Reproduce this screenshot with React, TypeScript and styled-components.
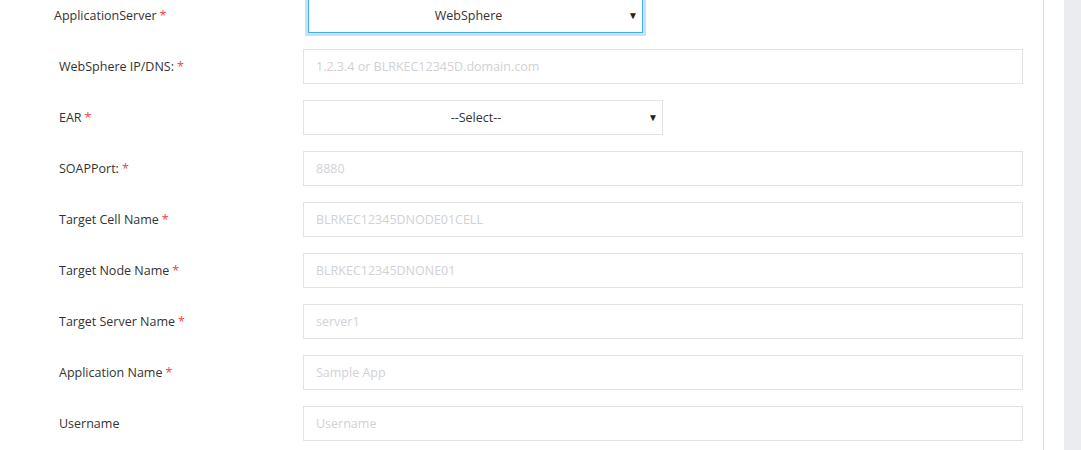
import React from "react";
import styled, { createGlobalStyle } from "styled-components";

const Global = createGlobalStyle`
  html, body { margin: 0; padding: 0; background: #fff; }
  body { font-family: "Open Sans", "Noto Sans", sans-serif; font-size: 13px; color: #333; overflow: hidden; }
`;

const Page = styled.div`
  display: flex;
  width: 1081px;
  height: 450px;
  overflow: hidden;
`;

const Main = styled.div`
  width: 1043px;
  border-right: 1px solid #dcdcdc;
  flex-shrink: 0;
`;

const Spacer = styled.div`
  width: 20px;
  flex-shrink: 0;
`;

const Side = styled.div`
  flex: 1;
  background: #ebecf0;
`;

const Form = styled.div`
  display: flex;
  flex-direction: column;
  gap: 16px;
  margin-top: -2px;
`;

const Row = styled.div<{ $indent: number }>`
  display: grid;
  grid-template-columns: ${(p) => 303 - p.$indent}px 720px;
  align-items: center;
  padding-left: ${(p) => p.$indent}px;
  height: 35px;
`;

const Label = styled.label`
  font-size: 12.5px;
  color: #333;
  white-space: nowrap;
`;

const Star = styled.span`
  color: #e8474c;
  margin-left: 3px;
`;

const Input = styled.input`
  box-sizing: border-box;
  width: 720px;
  height: 35px;
  border: 1px solid #e3e3e3;
  padding: 0 12px;
  font-family: inherit;
  font-size: 12.5px;
  outline: none;
  &::placeholder { color: #d0d2d6; }
`;

const SelectBox = styled.div<{ $w: number; $focus?: boolean; $offset?: number }>`
  box-sizing: border-box;
  position: relative;
  width: ${(p) => p.$w}px;
  height: 35px;
  margin-left: ${(p) => p.$offset || 0}px;
  padding-right: 14px;
  display: flex;
  align-items: center;
  justify-content: center;
  border: 1px solid ${(p) => (p.$focus ? "#45b1f2" : "#e3e3e3")};
  box-shadow: ${(p) => (p.$focus ? "0 0 0 3px #c5e2f7" : "none")};
  font-size: 12.5px;
  color: #333;
`;

const Caret = styled.span`
  position: absolute;
  right: 4px;
  top: 50%;
  transform: translateY(-55%);
  font-size: 10px;
  color: #222;
`;

type Field = { label: string; req: boolean; placeholder?: string; select?: string };

const fields: Field[] = [
  { label: "WebSphere IP/DNS:", req: true, placeholder: "1.2.3.4 or BLRKEC12345D.domain.com" },
  { label: "EAR", req: true, select: "--Select--" },
  { label: "SOAPPort:", req: true, placeholder: "8880" },
  { label: "Target Cell Name", req: true, placeholder: "BLRKEC12345DNODE01CELL" },
  { label: "Target Node Name", req: true, placeholder: "BLRKEC12345DNONE01" },
  { label: "Target Server Name", req: true, placeholder: "server1" },
  { label: "Application Name", req: true, placeholder: "Sample App" },
  { label: "Username", req: false, placeholder: "Username" },
];

export default function App() {
  return (
    <Page>
      <Global />
      <Main>
        <Form>
          <Row $indent={54}>
            <Label>
              ApplicationServer<Star>*</Star>
            </Label>
            <SelectBox $w={335} $focus $offset={5}>
              WebSphere
              <Caret>▼</Caret>
            </SelectBox>
          </Row>
          {fields.map((f) => (
            <Row key={f.label} $indent={59}>
              <Label>
                {f.label}
                {f.req && <Star>*</Star>}
              </Label>
              {f.select ? (
                <SelectBox $w={360}>
                  {f.select}
                  <Caret>▼</Caret>
                </SelectBox>
              ) : (
                <Input placeholder={f.placeholder} />
              )}
            </Row>
          ))}
        </Form>
      </Main>
      <Spacer />
      <Side />
    </Page>
  );
}
